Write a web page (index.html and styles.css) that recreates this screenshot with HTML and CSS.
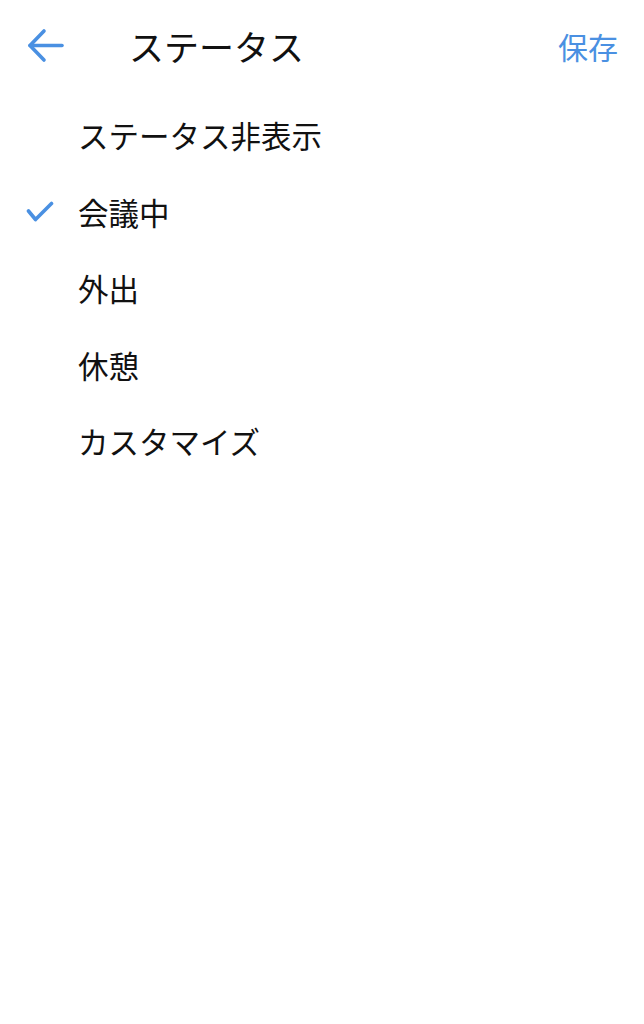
FILE: index.html
```html
<!DOCTYPE html>
<html lang="ja">
<head>
<meta charset="utf-8">
<title>ステータス</title>
<link rel="stylesheet" href="styles.css">
</head>
<body>
<div class="screen">
  <header class="topbar">
    <button class="back" aria-label="戻る">
      <svg width="38" height="36" viewBox="0 0 38 36" fill="none" stroke="#4a90e2" stroke-width="3.6" stroke-linecap="round" stroke-linejoin="round">
        <path d="M3 17.5 H35"/>
        <path d="M17 3 L3 17.5 L17 32"/>
      </svg>
    </button>
    <h1 class="title">ステータス</h1>
    <button class="save">保存</button>
  </header>
  <ul class="list">
    <li class="item"><span class="mark"></span><span class="label">ステータス非表示</span></li>
    <li class="item"><span class="mark">
      <svg width="28" height="22" viewBox="0 0 28 22" fill="none" stroke="#4a90e2" stroke-width="3.6" stroke-linecap="round" stroke-linejoin="round">
        <path d="M2.5 10 L9.5 18.5 L25.5 2.5"/>
      </svg></span><span class="label">会議中</span></li>
    <li class="item"><span class="mark"></span><span class="label">外出</span></li>
    <li class="item"><span class="mark"></span><span class="label">休憩</span></li>
    <li class="item"><span class="mark"></span><span class="label">カスタマイズ</span></li>
  </ul>
</div>
</body>
</html>
```

FILE: styles.css
```css
html, body {
  margin: 0;
  padding: 0;
  background: #ffffff;
}
body {
  font-family: "Noto Sans CJK JP", "Noto Sans", sans-serif;
  color: #111111;
}
.screen {
  width: 644px;
}
.topbar {
  height: 91px;
  display: flex;
  align-items: center;
  padding: 0 26px 0 27px;
  box-sizing: border-box;
}
.back {
  border: 0;
  background: none;
  padding: 0;
  margin: 0;
  width: 38px;
  height: 36px;
  display: flex;
  cursor: pointer;
}
.title {
  margin: 0 0 0 64px;
  font-size: 35px;
  font-weight: 400;
  line-height: 1;
  flex: 1;
  color: #111111;
}
.save {
  border: 0;
  background: none;
  padding: 0;
  margin: 0;
  font-family: inherit;
  font-size: 30px;
  line-height: 1;
  color: #4a90e2;
}
.list {
  list-style: none;
  margin: 0;
  padding: 6px 0 0 0;
}
.item {
  height: 76.5px;
  display: flex;
  align-items: center;
}
.mark {
  width: 78px;
  box-sizing: border-box;
  padding-left: 26px;
  display: flex;
  align-items: center;
}
.label {
  font-size: 30.5px;
  line-height: 1;
}
```
